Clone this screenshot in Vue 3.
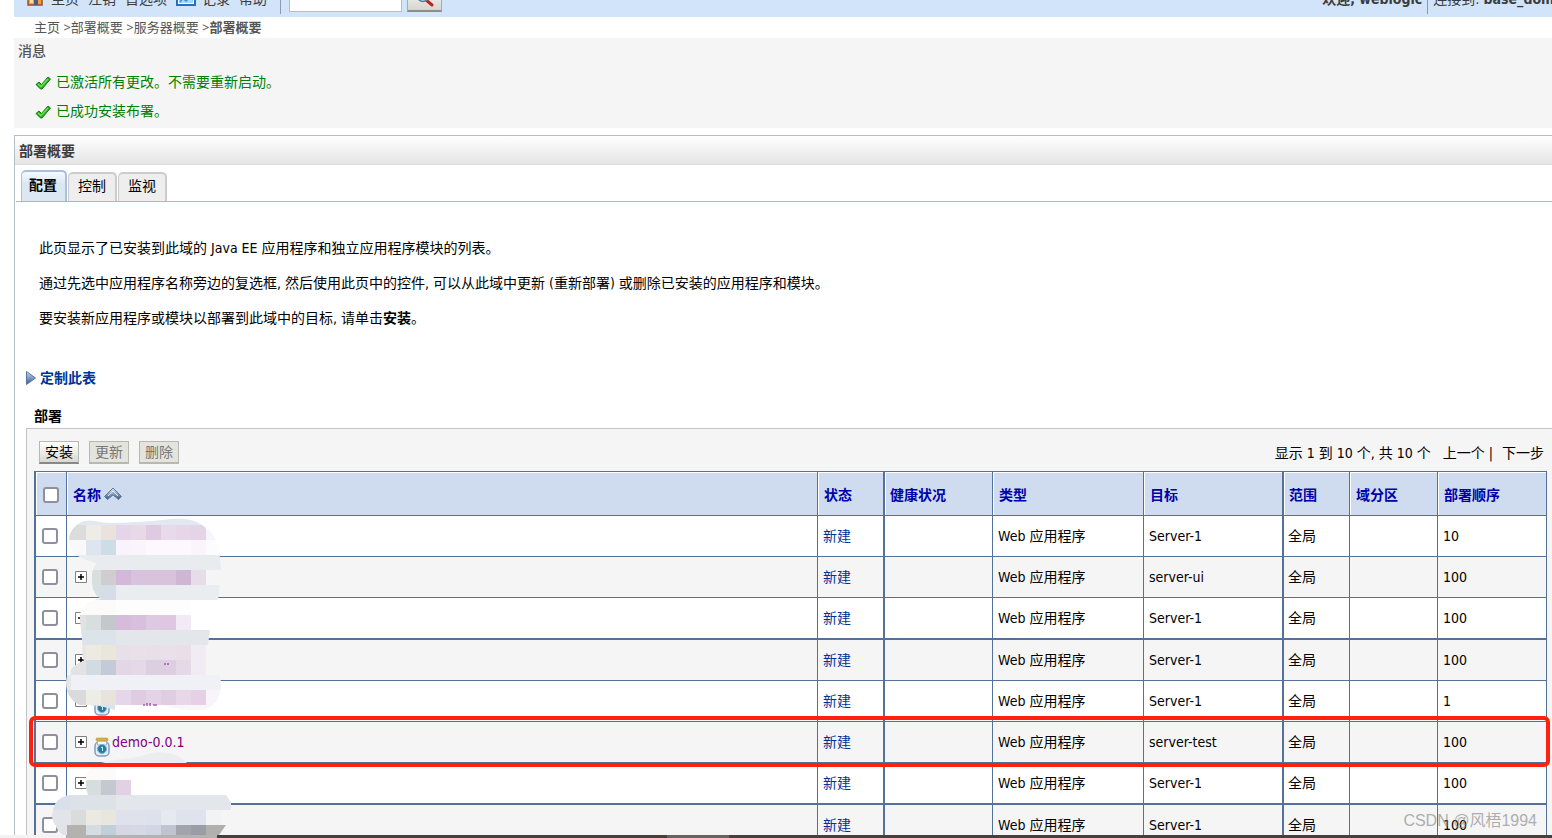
<script setup>
const menu = ['主页', '注销', '首选项']
const crumbs = ['主页', '部署概要', '服务器概要']
const messages = ['已激活所有更改。不需要重新启动。', '已成功安装布署。']
const tabs = ['配置', '控制', '监视']
const heads = ['状态', '健康状况', '类型', '目标', '范围', '域分区', '部署顺序']
const rows = [
  { target: 'Server-1', order: 10 },
  { target: 'server-ui', order: 100, node: true },
  { target: 'Server-1', order: 100, node: true },
  { target: 'Server-1', order: 100, node: true },
  { target: 'Server-1', order: 1, node: true, jar: true },
  { target: 'server-test', order: 100, node: true, jar: true, name: 'demo-0.0.1', marked: true },
  { target: 'Server-1', order: 100, node: true },
  { target: 'Server-1', order: 100 },
]

/* Redaction mosaic: [y, height, [[x, width, colour], ...]] */
const run = (x, list) => list.split(' ').map((c, i) => [x + i * 15, 15, '#' + c])
const mosaic = [
  [518, 7, [[66, 160, '#e1e8f2']]],
  [525, 15, [[66, 5, '#dcdcdc'], ...run(71, 'dcdcdc edece7 ece2dd e6d5e8 e7dae7 dfcae2 e8daea e6d6e7 e4d4e8 f8f5fa')]],
  [540, 15, run(56, 'f9f9f9 f9f9f9 dde6ee cddce6 f9f4fb f9f5fa fcf8fd fcf8fd fcf8fd f9f5fa fcfcfe')],
  [555, 15, [[66, 160, '#e8ecef']]],
  [570, 15, run(86, 'd8dedb cfcdcf d4b8d9 d9c3dc d9c3dc d9c3dc d0b6d5 e7dcea')],
  [585, 15, [[86, 15, '#d8dfe4'], [101, 15, '#d5dee6'], [116, 110, '#eaedf0']]],
  [600, 15, [[76, 40, '#fdfbfa'], [116, 75, '#fefdfd']]],
  [615, 15, run(71, 'e2e2e2 d8dede c3c8cd d7bbdb d8bfde ddcae2 dfc7e2 f2ebf5')],
  [630, 15, [[76, 40, '#dde4e9'], [116, 100, '#e3e7ec']]],
  [645, 15, run(71, 'e6e6e6 edeae2 ebe6da e8e0e8 eae0e8 e8dfe8 e9e0e9 eadfe9 f1ecf3')],
  [660, 15, run(71, 'e3e3e3 d2dbe2 c3cbd9 e3d6e6 e5d9e7 dccfe0 ddcfe1 e6d9e7 f1ecf4')],
  [675, 15, [[61, 10, '#e6e7e9'], [71, 155, '#eff1f6']]],
  [690, 15, run(56, 'dadadc dadadc edece6 e8e3dd e6d6e9 e0cce2 e4d2e7 e1cde2 e8d6e9 e5d0e5 f8f5fa')],
  [705, 6, [[91, 25, '#d9e4ee'], [156, 60, '#f9f6fa']]],
  [752, 11, [[96, 100, '#ebedf0']]],
  [765, 15, [[86, 30, '#fdfbf9']]],
  [780, 15, run(86, 'd5dedd c3c9cf e3d0e5')],
  [795, 15, [[51, 20, '#d8e0ea'], [71, 45, '#dce2e8'], [116, 120, '#e3e7ec']]],
  [810, 15, [[50, 6, '#e2e4e9'], ...run(56, 'e2e4e9 dadbdb ece9e2 e9e6de dfe1ec dfe1ec dce1ec e6e9ef dfe3ee dfe3ee f1f3f5')]],
  [825, 13, [[56, 11, '#e1e3e8'], [67, 19, '#b4b2b1'], ...run(86, 'd5dde3 c1cfda d5d8e4 d5d9e6 d0d7e4 c1c3d0 a2a4ad 9a9da6 b2b0ae b2b0ae')]],
]
</script>

<template>
  <div class="page">
    <header class="topbar">
      <svg class="home" width="18" height="18" viewBox="0 0 18 18"><path d="M0 7 9 0l9 7z" fill="#c43c1c" /><path d="M2 6h14v9H2z" fill="#f0a040" stroke="#a84a20" stroke-width="1.5" /><path d="M4 7h3v6H4z" fill="#fbe29c" /><path d="M8 7h4v8H8z" fill="#5a5678" /></svg>
      <a v-for="m in menu" :key="m" href="#">{{ m }}</a>
      <svg class="record" width="20" height="18" viewBox="0 0 20 18"><path d="M1 1h18v14H1z" fill="#fff" stroke="#2670b8" stroke-width="2" /><path d="M3 4h14v9H3z" fill="#9ddcfa" /><path d="m4 12 3-4 3 3 4-4 3 3" fill="none" stroke="#3d83e0" stroke-width="1.5" /></svg>
      <a href="#">记录</a>
      <a href="#">帮助</a>
      <span class="bar first"></span>
      <input class="search" type="text" aria-label="搜索">
      <button class="go" type="button" aria-label="搜索">
        <svg width="18" height="18" viewBox="0 0 18 18"><path d="m9 10 7 6" stroke="#bd2222" stroke-width="3" stroke-linecap="round" /><circle cx="7" cy="7" r="5.5" fill="#a9e3f5" stroke="#607d93" stroke-width="1.5" /></svg>
      </button>
      <div class="who"><b>欢迎, weblogic</b><span class="bar"></span><span>连接到: <b>base_domain</b></span></div>
    </header>

    <nav class="crumbs">
      <template v-for="c in crumbs" :key="c"><a href="#">{{ c }}</a> &gt;</template><b>部署概要</b>
    </nav>

    <section class="messages">
      <h2>消息</h2>
      <p v-for="m in messages" :key="m">
        <svg width="16" height="16" viewBox="0 0 16 16"><path d="M1 10.500 4 8l2.500 2.500L13 3l2.500 2L7 15H5.500z" fill="#27ae22" stroke="#147a18" /><path d="m3 10 3 2.500L13 5" fill="none" stroke="#74e34f" stroke-width="1.300" /></svg>{{ m }}
      </p>
    </section>

    <main class="panel">
      <h1>部署概要</h1>
      <div class="tabs">
        <button v-for="(t, i) in tabs" :key="t" type="button" :class="{ active: i === 0 }">{{ t }}</button>
      </div>
      <div class="intro">
        <p>此页显示了已安装到此域的 Java EE 应用程序和独立应用程序模块的列表。</p>
        <p>通过先选中应用程序名称旁边的复选框, 然后使用此页中的控件, 可以从此域中更新 (重新部署) 或删除已安装的应用程序和模块。</p>
        <p>要安装新应用程序或模块以部署到此域中的目标, 请单击<b>安装</b>。</p>
      </div>
      <a class="customize" href="#">
        <svg width="10" height="16" viewBox="0 0 10 16"><defs><linearGradient id="arrow" x2="0" y2="1"><stop stop-color="#c6d8f0" /><stop offset="1" stop-color="#365d94" /></linearGradient></defs><path d="M.5 1.500 9.500 8 .5 14.500z" fill="url(#arrow)" stroke="#54759f" /></svg>定制此表
      </a>
      <h3>部署</h3>
      <section class="listing">
        <div class="tools">
          <button type="button">安装</button>
          <button type="button" disabled>更新</button>
          <button type="button" disabled>删除</button>
          <div class="pager"><span>显示 1 到 10 个, 共 10 个</span><span class="prev">上一个</span><span class="sep">|</span><span>下一步</span></div>
        </div>
        <div class="sheet">
          <table>
            <colgroup><col class="c-check"><col><col class="c-state"><col class="c-health"><col class="c-type"><col class="c-target"><col class="c-scope"><col class="c-part"><col class="c-order"></colgroup>
            <thead>
              <tr>
                <th><input type="checkbox" aria-label="全选"></th>
                <th>
                  <a href="#">名称<svg width="18" height="14" viewBox="0 0 18 14"><defs><linearGradient id="chev" x2="0" y2="1"><stop stop-color="#e3edf8" /><stop offset="1" stop-color="#34577f" /></linearGradient></defs><path d="M9 1 17.500 9.500l-3 3L9 8l-5.500 4.500-3-3z" fill="url(#chev)" stroke="#60799b" stroke-linejoin="round" /><path d="m4 9 5-5 5 5" fill="none" stroke="#dce8f5" /></svg></a>
                </th>
                <th v-for="h in heads" :key="h"><a href="#">{{ h }}</a></th>
              </tr>
            </thead>
            <tbody>
              <tr v-for="(r, i) in rows" :key="i">
                <td><input type="checkbox" :aria-label="'选择第 ' + (i + 1) + ' 行'"></td>
                <td>
                  <div class="name">
                    <svg v-if="r.node" class="node" width="12" height="12" viewBox="0 0 12 12"><path d="M.5.5h11v11H.5z" fill="#fff" stroke="#808080" /><path d="M3 6h6M6 3v6" stroke="#000" stroke-width="1.500" /></svg>
                    <svg v-if="r.jar" class="jar" width="16" height="20" viewBox="0 0 16 20"><rect x="1" y="5" width="14" height="14" rx="4" fill="#e4edf6" stroke="#829cbd" stroke-width="1.500" /><path d="M3.500 4h9v4h-9z" fill="#f3f6fa" stroke="#a6b6ca" /><rect x="2" y="1" width="12" height="3" rx="1" fill="#d8b14a" stroke="#b18b2c" stroke-width=".5" /><circle cx="8" cy="12" r="4.500" fill="#277b9c" stroke="#7fb4d9" /><path d="M7 10.500 8.500 10v4" fill="none" stroke="#c8eaf0" /></svg>
                    <a v-if="r.name" href="#">{{ r.name }}</a>
                  </div>
                  <span v-if="r.marked" class="mark"></span>
                </td>
                <td><a href="#">新建</a></td>
                <td></td>
                <td>Web 应用程序</td>
                <td>{{ r.target }}</td>
                <td>全局</td>
                <td></td>
                <td>{{ r.order }}</td>
              </tr>
            </tbody>
          </table>
          <svg class="mosaic" width="190" height="323" viewBox="50 515 190 323" aria-hidden="true">
            <defs>
              <clipPath id="smudge">
                <path d="M69 540C69 530 78 522 85 521C95 520 102 523 110 523C135 522 150 522 170 519C185 518 196 519 206 528C217 536 220 548 221 570L206 570V585H220L218 600H191V615V630H210L208 645H206V660C215 664 221 672 221 684C221 698 214 709 200 710C182 711 170 706 158 705H115V710L100 706L80 705C70 701 66 692 66 682C67 671 74 664 84 661C81 653 83 648 82 640L80 620C79 607 87 600 101 599C94 594 91 588 92 575C92 570 94 566 97 563C84 560 69 555 69 540Z" />
                <path d="M101 763C118 758 137 759 148 754C164 749 180 755 187 763ZM86 780C85 772 92 766 102 764H116V780H131V795H226L231 802V810H221V825H226L217 838H66C61 834 53 826 52 816C53 803 59 796 70 795H88L86 788Z" />
              </clipPath>
            </defs>
            <g clip-path="url(#smudge)" shape-rendering="crispEdges">
              <template v-for="band in mosaic" :key="band[0]">
                <rect v-for="c in band[2]" :key="c[0]" :x="c[0]" :y="band[0]" :width="c[1]" :height="band[1]" :fill="c[2]" />
              </template>
            </g>
            <path d="M164 664h2M167 664h2M143 705h2M147 703v3M150 703v3M153 705h4" stroke="#83208a" fill="none" />
          </svg>
        </div>
      </section>
    </main>
    <div class="watermark">CSDN @风梧1994</div>
    <div class="edge"></div>
  </div>
</template>

<style>
body { margin: 0; overflow: hidden; }
</style>

<style scoped>
.page { position: relative; height: 100vh; overflow: hidden; padding-left: 14px; box-sizing: border-box; background: #fff; color: #000; font: 14px/20px "DejaVu Sans Condensed", "Noto Sans CJK SC", sans-serif; }
a { color: inherit; text-decoration: none; }
h1, h2, h3, p { margin: 0; font-size: 14px; }
.messages p, .intro p { font-weight: 400; }
button, input { font: inherit; box-sizing: border-box; margin: 0; }
.topbar { display: flex; align-items: center; height: 37px; margin-top: -20px; padding-left: 12px; background: #d1e4f9; color: #3c3c3c; white-space: nowrap; }
.topbar > a { margin-right: 9px; }
.home { margin-right: 7px; }
.record { margin-right: 6px; }
.home, .record, .go { flex: none; }
.bar { flex: none; width: 1px; height: 30px; background: #8d9aab; }
.first { margin: 0 8px 0 4px; }
.search { width: 113px; height: 27px; margin-right: 5px; border: 1px solid #bbb; background: #fff; }
.go { display: grid; place-items: center; width: 35px; height: 27px; padding: 0; border: 1px solid #aaa; border-bottom: 2px solid #8d8d88; background: linear-gradient(#fff, #d5d5ce); }
.who { display: flex; align-items: center; gap: 5px; margin: 0 -24px 0 auto; }
.crumbs { padding: 0 20px 1px; font-family: "Noto Sans", "Noto Sans CJK SC", sans-serif; font-size: 13px; color: #555; }
.messages { padding: 3px 4px 7px; background: #f5f5f5; }
.messages h2 { color: #555; font-weight: 500; }
.messages p { display: flex; align-items: center; gap: 5px; padding: 11px 0 0 17px; color: #008000; line-height: 20px; }
.messages p + p { padding-top: 9px; }
.panel { margin-top: 7px; border-top: 1px solid #bbb; border-left: 1px solid #b9bdc5; }
h1 { padding: 5px 4px 3px; border-bottom: 1px solid #ddd; background: linear-gradient(#fff, #e5e5e5); color: #3c3c3c; }
.tabs { display: flex; align-items: flex-end; gap: 1px; margin-left: 1px; padding: 5px 0 0 5px; border-bottom: 1px solid #9db9d3; }
.tabs button { height: 29px; padding: 0 9px 4px; border: 2px solid #ccc; border-width: 2px 2px 0 1px; border-radius: 5px 5px 0 0; background: #eee; color: #000; }
.tabs .active { height: 31px; padding: 0 8px 4px 7px; border-color: #a9c1dc; background: linear-gradient(#f5faff, #dbe8f2 40%); font-weight: 700; }
.intro { display: grid; gap: 15px; padding: 36px 24px 0; }
.customize { display: flex; align-items: center; gap: 4px; margin-top: 40px; padding-left: 11px; color: #039; font-weight: 700; }
h3 { padding: 18px 0 2px 19px; }
.listing { margin-left: 11px; padding: 12px 5px 0 7px; border: 1px solid #c3c3c3; border-width: 1px 0 0 1px; background: #f5f5f5; }
.tools { display: flex; align-items: center; gap: 10px; padding: 0 3px 7px 5px; }
.tools button { height: 23px; padding: 0 5px; border: 1px solid #b8b8b2; border-bottom: 2px solid #888; background: linear-gradient(#fff, #d9d9d2); color: #000; line-height: 18px; }
.tools button:disabled { border: 1px solid #b8b8b0; border-bottom-width: 2px; background: #e3e4dd; color: #777; }
.pager { display: flex; margin-left: auto; }
.prev { margin-left: 12px; }
.sep { margin: 0 9px 0 4px; }
.sheet { position: relative; }
table { width: 100%; table-layout: fixed; border-collapse: separate; border-spacing: 0; border-right: 1px solid #547299; }
.c-check { width: 32px; }
.c-state { width: 66px; }
.c-health { width: 109px; }
.c-type { width: 151px; }
.c-target { width: 139px; }
.c-scope { width: 67px; }
.c-part { width: 88px; }
.c-order { width: 109px; }
th, td { box-sizing: border-box; height: 41px; padding: 0 5px; border: 0 solid #547299; border-width: 1px 0 0 1px; text-align: left; }
th { height: 44px; background: #cfdcef; box-shadow: inset 1px 1px #fff; color: #0000a8; padding-left: 6px; padding-top: 2px; }
th:first-child, td:first-child, th:nth-child(4), td:nth-child(4), th:nth-child(7), td:nth-child(7) { border-left-width: 2px; }
th:nth-child(4), th:nth-child(7) { padding-left: 5px; }
td:nth-child(7) { padding-left: 4px; }
tbody tr { position: relative; background: #fff; }
tbody tr:nth-child(even) { background: #f5f5f5; }
tbody tr:nth-child(4n) td { height: 42px; border-top-width: 2px; }
td:nth-child(3) { color: #039; }
input[type="checkbox"] { appearance: none; display: block; width: 16px; height: 16px; margin-left: 1px; border: 2px solid #8f8f9d; border-radius: 3px; background: #fff; }
th svg { margin-left: 3px; vertical-align: -1px; }
.name { display: flex; align-items: center; padding-left: 3px; }
.node { margin-right: 7px; }
.jar { margin: 10px 2px 0 0; }
.name a { color: #800080; }
.mark { position: absolute; inset: -5px -4px -5px -5px; z-index: 2; border: 4px solid #ff2010; border-radius: 6px; pointer-events: none; }
.mosaic { position: absolute; left: 16px; top: 44px; }
.watermark { position: absolute; right: 15px; bottom: 5px; color: #888a; font: 16px/24px "Liberation Sans", "Noto Sans CJK SC", sans-serif; }
.edge { position: absolute; inset: auto 0 0 0; height: 3px; background: linear-gradient(90deg, #f3f3f3 66px, #b4b2b1 66px, #b4b2b1 217px, #484038 217px, #484038 43%, #686260 43%, #686260 47%, #484038 47%); }
</style>
